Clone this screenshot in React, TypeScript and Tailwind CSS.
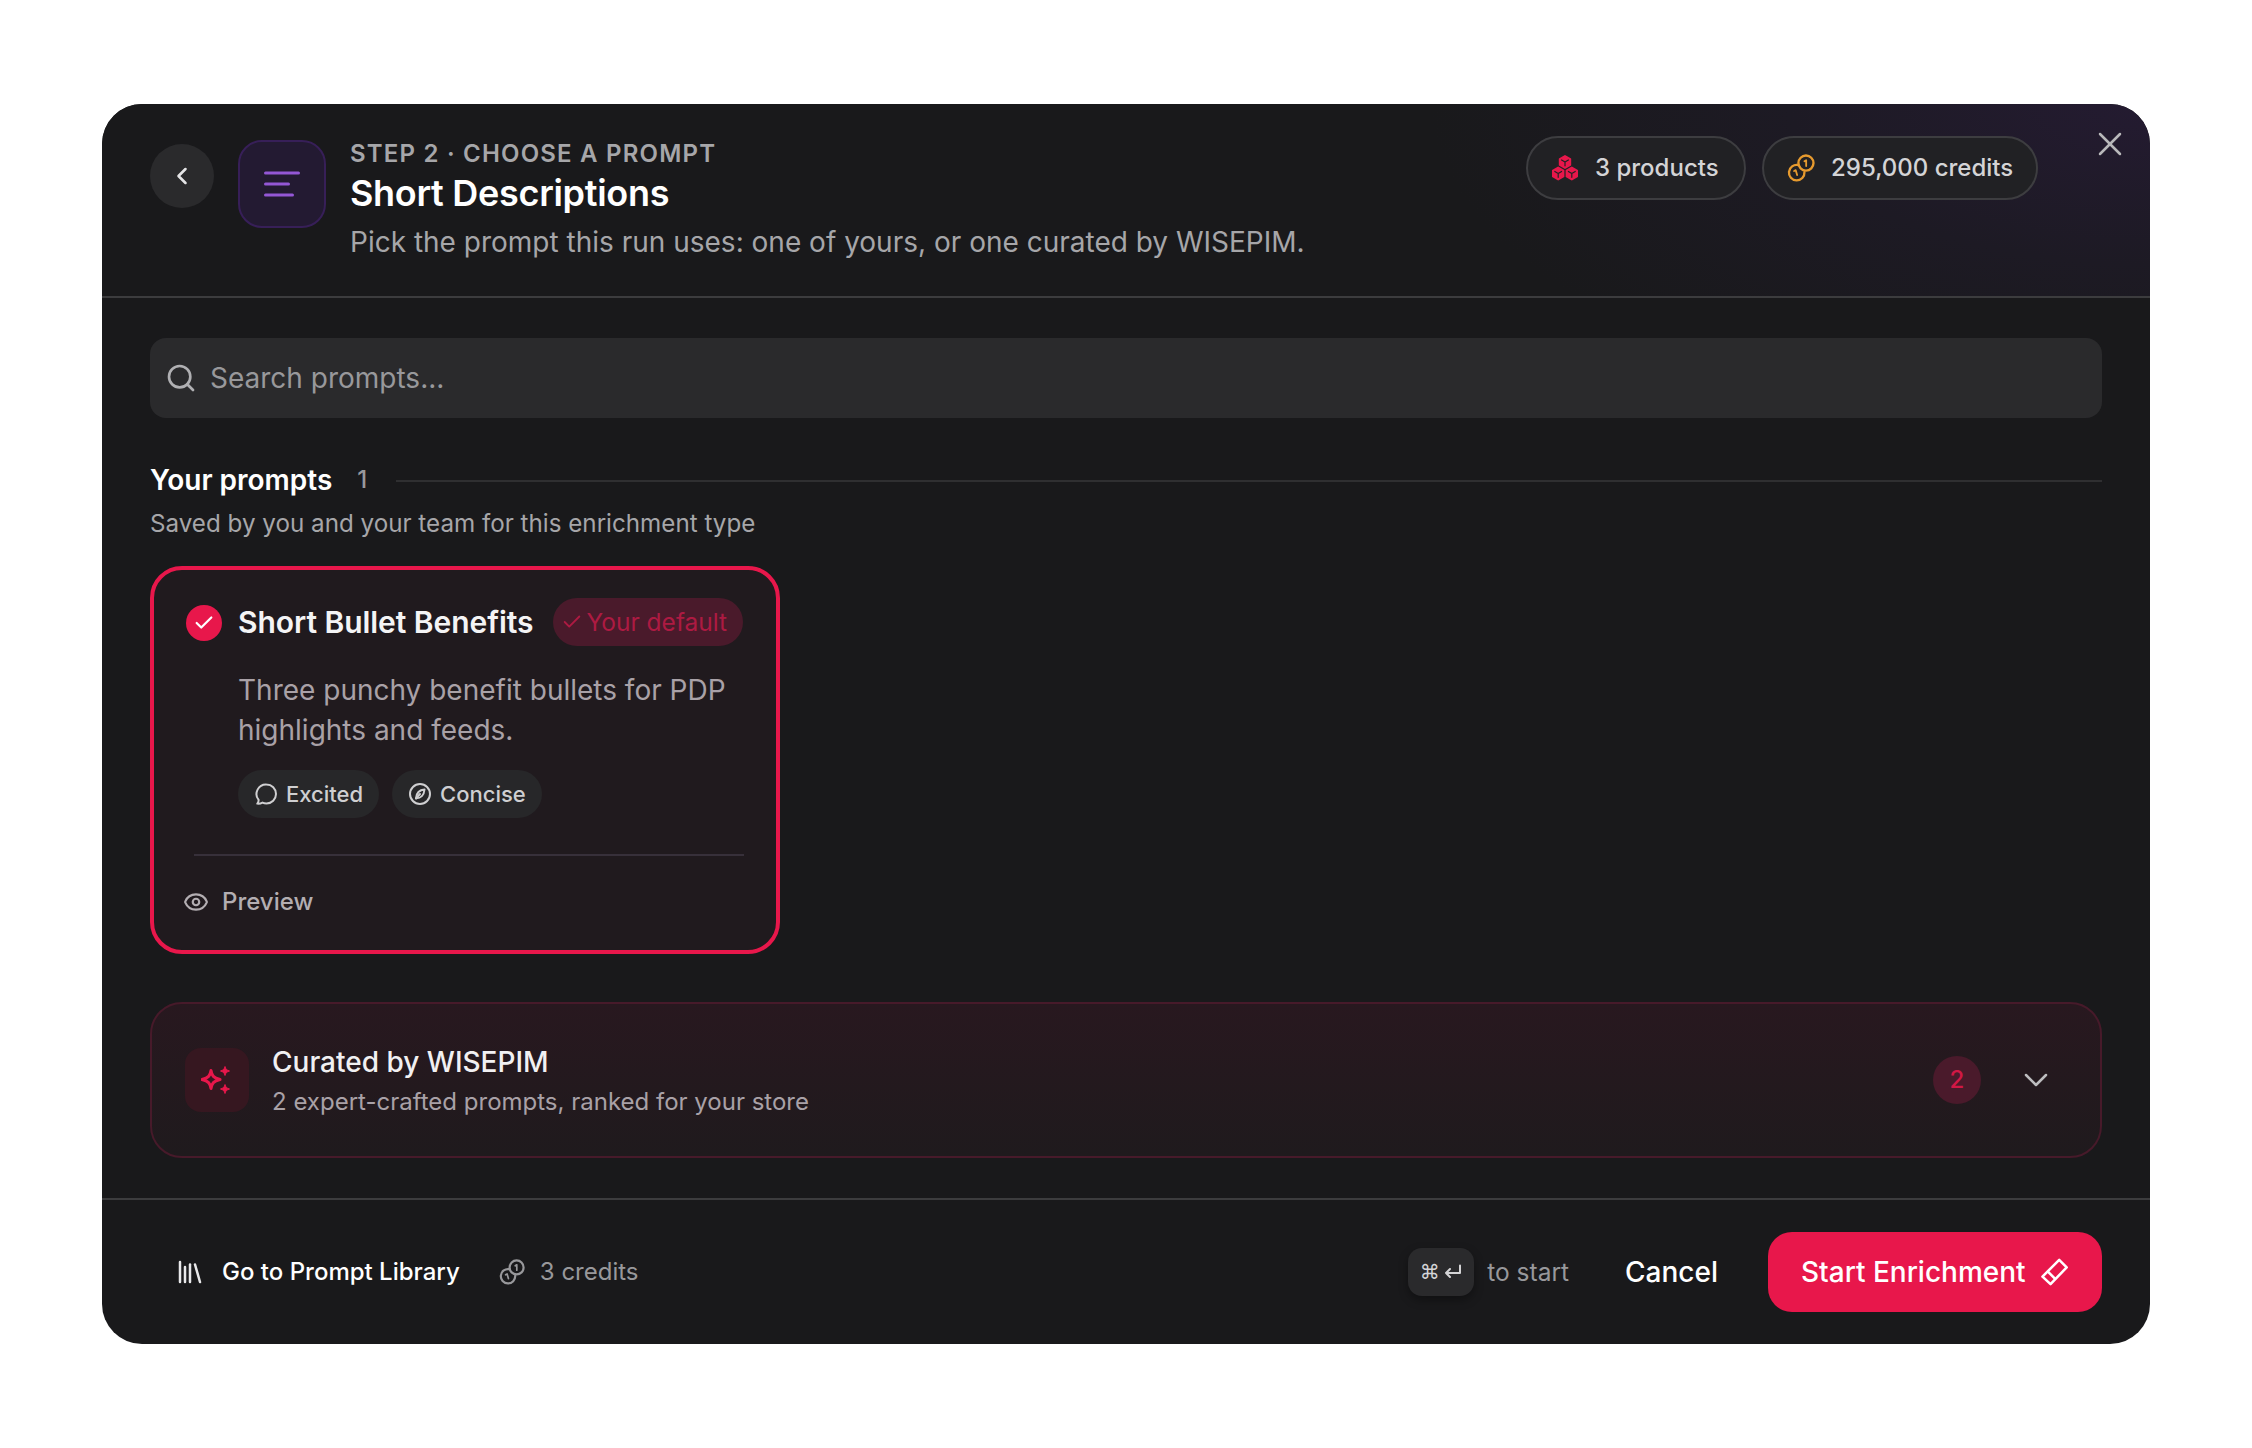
import React from "react";
import { ChevronLeft, X, Search, Eye, Check, ChevronDown, Library } from "lucide-react";

function Cube({ x, y }: { x: number; y: number }) {
  return (
    <g transform={`translate(${x} ${y})`} strokeLinejoin="round" strokeLinecap="round">
      <path d="M0 -6 5.200 -3V3L0 6-5.200 3V-3Z" fill="currentColor" stroke="currentColor" strokeWidth="2" />
      <path d="M-3.400 -2 0 0 3.400 -2M0 0V3.800" fill="none" stroke="#212124" strokeWidth="1.200" />
    </g>
  );
}

function ProductsIcon() {
  return (
    <svg viewBox="0 0 28 28" className="h-[28px] w-[28px] text-[#e8174b]">
      <Cube x={7.200} y={19.500} />
      <Cube x={20.800} y={19.500} />
      <Cube x={14} y={8} />
    </svg>
  );
}

function CoinsIcon({ className }: { className: string }) {
  return (
    <svg viewBox="0 0 26 26" fill="none" stroke="currentColor" strokeWidth="2.200" strokeLinecap="round" strokeLinejoin="round" className={className}>
      <circle cx="17.600" cy="8.400" r="7" />
      <path d="M16.200 6.800 17.800 5.800V11.200" strokeWidth="1.700" />
      <path d="M10.400 10.200A7.200 7.200 0 1 0 16.200 16.800" />
      <path d="M6.600 15.800 8.100 15 9.400 19.600" strokeWidth="1.700" />
    </svg>
  );
}

function SparkleIcon() {
  return (
    <svg viewBox="0 0 32 32" className="h-[32px] w-[32px]" fill="none">
      <path d="M10 6.500C10.900 12 12.500 13.700 19 15.500 12.500 17.300 10.900 19 10 24.500 9.100 19 7.500 17.300 1 15.500 7.500 13.700 9.100 12 10 6.500Z" stroke="#e8174b" strokeWidth="3" strokeLinejoin="round" />
      <path d="M24 2.500C24.500 5 25.500 6 28.500 7 25.500 8 24.500 9 24 11.500 23.500 9 22.500 8 19.500 7 22.500 6 23.500 5 24 2.500Z" fill="#e8174b" stroke="#e8174b" strokeWidth="1" strokeLinejoin="round" />
      <path d="M24 20.500C24.500 23 25.500 24 28.500 25 25.500 26 24.500 27 24 29.500 23.500 27 22.500 26 19.500 25 22.500 24 23.500 23 24 20.500Z" fill="#e8174b" stroke="#e8174b" strokeWidth="1" strokeLinejoin="round" />
    </svg>
  );
}

function ChatIcon() {
  return (
    <svg viewBox="0 0 24 24" fill="none" stroke="currentColor" strokeWidth="2" strokeLinecap="round" strokeLinejoin="round" className="h-[24px] w-[24px]">
      <path d="M12.500 2.500a9.500 9.500 0 0 1 0 19c-1.400 0-2.800-.3-4-.9-1.500.8-3.300 1.200-5.200 1 .9-1 1.400-2.300 1.300-3.700A9.500 9.500 0 0 1 12.500 2.500Z" />
    </svg>
  );
}

function ToneIcon() {
  return (
    <svg viewBox="0 0 24 24" fill="none" stroke="currentColor" strokeWidth="2" strokeLinecap="round" strokeLinejoin="round" className="h-[24px] w-[24px]">
      <circle cx="12" cy="12" r="10" />
      <path d="M16.500 7.500c-4.500.3-8 2.600-8.500 8.800 4.600.2 8-3 8.500-8.800Z" />
      <path d="M8 16.500 12 12" />
    </svg>
  );
}

function EraserIcon() {
  return (
    <svg viewBox="0 0 26 26" fill="none" stroke="currentColor" strokeWidth="2.200" strokeLinejoin="round" className="h-[30px] w-[30px]">
      <path d="M17.500 2.500 24 9 10 23.500 3 17Z" />
      <path d="M7.500 12.500 14 19" />
    </svg>
  );
}

function Chip({ icon, label }: { icon: React.ReactNode; label: string }) {
  return (
    <span className="flex h-[48px] items-center gap-[8px] rounded-full bg-[#272729] px-[16px] text-[22px] font-medium text-[#cfcfd1]">
      {icon}
      {label}
    </span>
  );
}

function Pill({ icon, label, className }: { icon: React.ReactNode; label: string; className: string }) {
  return (
    <span className={`flex h-[64px] items-center rounded-full border-2 border-[#3d3d40] bg-[#212124] text-[24px] font-medium text-[#d4d4d6] ${className}`}>
      {icon}
      {label}
    </span>
  );
}

export default function App() {
  return (
    <div className="h-[1448px] w-[2252px] bg-white pl-[102px] pt-[104px] font-['Inter',sans-serif]">
      <div className="flex h-[1240px] w-[2048px] flex-col overflow-hidden rounded-[40px] bg-[#19191b]">
        <header className="relative flex h-[194px] shrink-0 items-start justify-between border-b-2 border-[#3c3c3e] bg-[radial-gradient(ellipse_720px_320px_at_100%_0%,#241b31_0%,#1d1a24_50%,#19191b_100%)] pl-[48px] pr-[112px]">
          <div className="flex items-start">
            <button className="mt-[40px] flex h-[64px] w-[64px] items-center justify-center rounded-full bg-[#2a2a2c] text-[#e4e4e6]">
              <ChevronLeft size={28} strokeWidth={2.200} />
            </button>
            <div className="ml-[24px] mt-[36px] flex h-[88px] w-[88px] items-center justify-center rounded-[24px] border-2 border-[#371f58] bg-[#231a32]">
              <svg viewBox="0 0 36 26" className="h-[26px] w-[36px]" fill="none" stroke="#9457d6" strokeWidth="3" strokeLinecap="round">
                <path d="M1.500 2H34.500M1.500 13H24.500M1.500 24H28.500" />
              </svg>
            </div>
            <div className="ml-[24px] mt-[34px] flex flex-col">
              <div className="h-[32px] text-[24px] font-semibold leading-[32px] tracking-[1.200px] text-[#a6a6a9]">STEP 2 · CHOOSE A PROMPT</div>
              <div className="-mt-[1px] h-[48px] text-[36px] font-semibold leading-[48px] tracking-[-0.3px] text-white">Short Descriptions</div>
              <div className="mt-[5px] h-[40px] text-[28px] leading-[40px] text-[#a6a6a9]">Pick the prompt this run uses: one of yours, or one curated by WISEPIM.</div>
            </div>
          </div>
          <div className="mt-[32px] flex items-center gap-[16px]">
            <Pill className="w-[220px] gap-[16px] pl-[23px]" icon={<ProductsIcon />} label="3 products" />
            <Pill className="w-[276px] gap-[16px] pl-[23px]" icon={<CoinsIcon className="h-[28px] w-[28px] text-[#e69a2e]" />} label="295,000 credits" />
          </div>
          <button className="absolute right-[20px] top-[20px] text-[#b8b8ba]">
            <X size={40} strokeWidth={1.500} />
          </button>
        </header>

        <main className="flex flex-1 flex-col px-[48px] pt-[40px]">
          <div className="flex h-[80px] items-center gap-[13px] rounded-[16px] bg-[#2a2a2c] pl-[15px] text-[28px] text-[#98989b]">
            <Search size={32} strokeWidth={2} className="text-[#b0b0b3]" />
            Search prompts...
          </div>

          <div className="mt-[44px] flex h-[36px] items-center">
            <span className="text-[28px] font-semibold text-white">Your prompts</span>
            <span className="ml-[25px] text-[24px] font-medium text-[#98989b]">1</span>
            <span className="ml-[29px] mt-[2px] h-[2px] flex-1 bg-[#2f2f31]" />
          </div>
          <div className="mt-[8px] h-[36px] text-[24.200px] leading-[36px] text-[#a6a6a9]">Saved by you and your team for this enrichment type</div>

          <div className="mt-[24px] flex h-[388px] w-[630px] flex-col rounded-[32px] border-4 border-[#e8174b] bg-[#201a1e] px-[32px]">
            <div className="mt-[28px] flex h-[48px] items-center">
              <span className="mt-[2px] flex h-[36px] w-[36px] items-center justify-center rounded-full bg-[#e8174b] text-white">
                <Check size={22} strokeWidth={2.400} />
              </span>
              <span className="ml-[16px] text-[30px] font-semibold tracking-[-0.05px] text-[#f4f4f5]">Short Bullet Benefits</span>
              <span className="ml-[19px] flex h-[48px] items-center gap-[4px] rounded-full bg-[#4a1a2b] pl-[8px] pr-[16px] text-[24.500px] text-[#ad1a42]">
                <Check size={22} strokeWidth={2} />
                Your default
              </span>
            </div>
            <p className="ml-[52px] mt-[24px] w-[510px] text-[28px] leading-[40px] text-[#a9a1a7]">Three punchy benefit bullets for PDP highlights and feeds.</p>
            <div className="ml-[52px] mt-[20px] flex gap-[13px]">
              <Chip icon={<ChatIcon />} label="Excited" />
              <Chip icon={<ToneIcon />} label="Concise" />
            </div>
            <div className="ml-[8px] mt-[36px] h-[2px] bg-[#37303a]" />
            <div className="mt-[28px] flex items-center gap-[13px] text-[24px] font-medium text-[#b3aeb2]">
              <Eye size={26} strokeWidth={2} className="-ml-[3px]" />
              Preview
            </div>
          </div>

          <div className="mt-[48px] flex h-[156px] items-center rounded-[32px] border-2 border-[#471a2a] bg-[linear-gradient(180deg,#28181f,#1f1a1d)] pl-[33px] pr-[44px]">
            <span className="flex h-[64px] w-[64px] items-center justify-center rounded-[16px] bg-[#361720]">
              <SparkleIcon />
            </span>
            <div className="ml-[23px] mt-[4px] flex flex-1 flex-col">
              <span className="h-[40px] text-[28px] font-medium leading-[40px] text-[#f1f0f2]">Curated by WISEPIM</span>
              <span className="h-[40px] text-[24px] leading-[40px] text-[#a9a1a7]">2 expert-crafted prompts, ranked for your store</span>
            </div>
            <span className="-mr-[1px] flex h-[48px] w-[48px] items-center justify-center rounded-full bg-[#4a1a2b] text-[24px] font-medium text-[#d01845]">2</span>
            <ChevronDown size={40} strokeWidth={1.500} className="ml-[36px] text-[#bdbdbf]" />
          </div>
        </main>

        <footer className="flex h-[146px] shrink-0 items-center border-t-2 border-[#3c3c3e] pl-[74px] pr-[48px]">
          <Library size={30} strokeWidth={2} className="-ml-[1px] text-[#e8e8ea]" />
          <span className="ml-[17px] text-[24px] font-medium text-white">Go to Prompt Library</span>
          <CoinsIcon className="ml-[39px] h-[26px] w-[26px] text-[#98989b]" />
          <span className="ml-[15px] text-[24px] text-[#98989b]">3 credits</span>
          <span className="ml-auto flex h-[48px] w-[66px] items-center justify-center gap-[3px] rounded-[14px] bg-[#2a2a2c] text-[20px] text-[#d4d4d6] shadow-[0_4px_10px_rgba(0,0,0,0.35)]">
            <span className="font-['DejaVu_Sans',sans-serif] text-[20px]">⌘</span>
            <svg viewBox="0 0 20 20" fill="none" stroke="currentColor" strokeWidth="2" strokeLinecap="round" strokeLinejoin="round" className="h-[20px] w-[20px]">
              <path d="M17 3.500V11H3M7 7 3 11l4 4" />
            </svg>
          </span>
          <span className="ml-[13px] text-[24.500px] text-[#98989b]">to start</span>
          <span className="ml-[56px] text-[28px] font-medium text-white">Cancel</span>
          <button className="ml-[50px] flex h-[80px] w-[334px] items-center gap-[13px] rounded-[24px] bg-[#e8174b] pl-[33px] text-[28px] font-medium text-white">
            Start Enrichment
            <EraserIcon />
          </button>
        </footer>
      </div>
    </div>
  );
}
